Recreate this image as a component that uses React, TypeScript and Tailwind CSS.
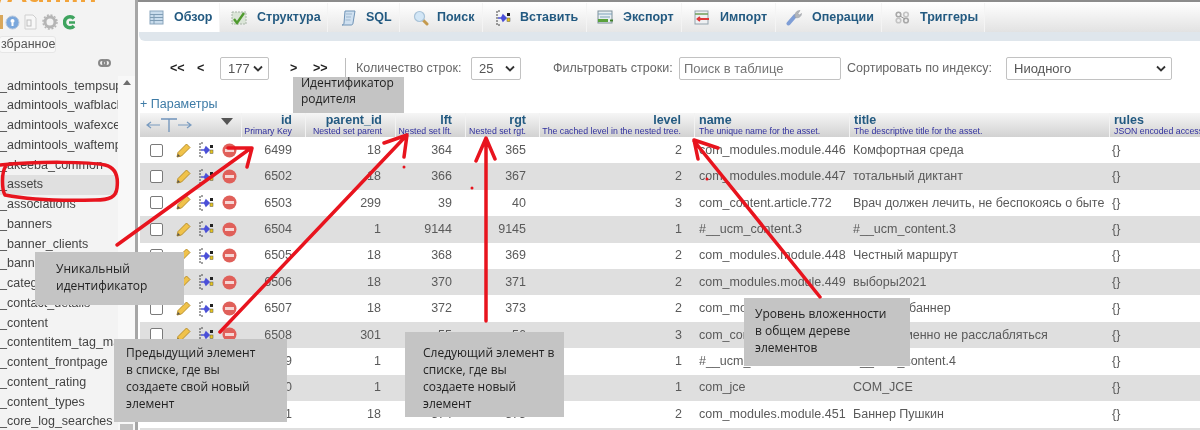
import { FunctionComponent } from "react";

const sidebarItems = [
  "_admintools_tempsupers",
  "_admintools_wafblacklists",
  "_admintools_wafexceptions",
  "_admintools_waftemplates",
  "_akeeba_common",
  "_assets",
  "_associations",
  "_banners",
  "_banner_clients",
  "_banner_tracks",
  "_categories",
  "_contact_details",
  "_content",
  "_contentitem_tag_map",
  "_content_frontpage",
  "_content_rating",
  "_content_types",
  "_core_log_searches",
];

const rows = [
  ["6499", "18", "364", "365", "2", "com_modules.module.446", "Комфортная среда"],
  ["6502", "18", "366", "367", "2", "com_modules.module.447", "тотальный диктант"],
  ["6503", "299", "39", "40", "3", "com_content.article.772", "Врач должен лечить, не беспокоясь о быте"],
  ["6504", "1", "9144", "9145", "1", "#__ucm_content.3", "#__ucm_content.3"],
  ["6505", "18", "368", "369", "2", "com_modules.module.448", "Честный маршрут"],
  ["6506", "18", "370", "371", "2", "com_modules.module.449", "выборы2021"],
  ["6507", "18", "372", "373", "2", "com_modules.module.450", "Большой баннер"],
  ["6508", "301", "55", "56", "3", "com_content.article.773", "Одновременно не расслабляться"],
  ["6509", "1", "9146", "9147", "1", "#__ucm_content.4", "#__ucm_content.4"],
  ["6510", "1", "9148", "9149", "1", "com_jce", "COM_JCE"],
  ["6511", "18", "374", "375", "2", "com_modules.module.451", "Баннер Пушкин"],
];

const columns =
  "grid grid-cols-[101px_64px_90px_70px_74px_155px_155px_260px_92px]";

const TableIcon = () => (
  <svg width="15" height="15" viewBox="0 0 15 15">
    <rect x="1" y="1" width="13" height="13" fill="#c9dcec" stroke="#8aa6bd" />
    <path d="M1 4.5h13M1 7.5h13M1 10.5h13M5 4.5v9.5" stroke="#7f9db5" />
  </svg>
);

const StructureIcon = () => (
  <svg width="16" height="16" viewBox="0 0 16 16">
    <rect x="1" y="2" width="14" height="12" fill="#dbe5d8" stroke="#a8b5a8" strokeDasharray="2 1" />
    <path d="M3 9l3 4 7-10" fill="none" stroke="#4f9a2e" strokeWidth="2.4" />
  </svg>
);

const SqlIcon = () => (
  <svg width="15" height="16" viewBox="0 0 15 16">
    <path d="M4 1h10l-2 12c0 1.5-1 2-2 2H1c1 0 2-1 2-2z" fill="#cfe0f0" stroke="#6f93b6" />
    <path d="M5 4h6M5 7h5M4.500 10h5" stroke="#9db7cf" />
  </svg>
);

const SearchIcon = () => (
  <svg width="16" height="16" viewBox="0 0 16 16">
    <path d="M9.500 9.500L14 14" stroke="#c49a4e" strokeWidth="3" strokeLinecap="round" />
    <circle cx="6.500" cy="6.500" r="5" fill="#d2e6f6" stroke="#a9c3d8" strokeWidth="1.200" />
  </svg>
);

const InsertIcon = () => (
  <svg width="15" height="16" viewBox="0 0 15 16">
    <path d="M4 1H1v14h3" fill="none" stroke="#444" strokeDasharray="2 1" />
    <path d="M2 8h5M7 5l-1.500 3L7 11l3-3z" fill="#4b50d8" stroke="#4b50d8" strokeWidth="1.500" />
    <rect x="11" y="3" width="3" height="3" fill="#222" />
    <rect x="11" y="8" width="3" height="3.500" fill="#e6c41e" stroke="#555" strokeWidth=".5" />
  </svg>
);

const ExportIcon = () => (
  <svg width="17" height="15" viewBox="0 0 17 15">
    <rect x="1" y="1" width="14" height="12" fill="#e6eef2" stroke="#7d8f9a" />
    <path d="M1 4h14M3 7h10" stroke="#7fa3bb" />
    <path d="M1 10.500h10" stroke="#5aa13b" strokeWidth="3" />
    <path d="M13 10.500l3 .1" stroke="#3f7f2a" strokeWidth="2" />
  </svg>
);

const ImportIcon = () => (
  <svg width="16" height="15" viewBox="0 0 16 15">
    <rect x="1" y="1" width="13" height="13" fill="#eef0f2" stroke="#94a3ad" />
    <path d="M1 4h13" stroke="#6f9f5a" strokeWidth="1.500" />
    <path d="M4 9h11M6 7L3.500 9 6 11" fill="none" stroke="#dd3b3b" strokeWidth="1.800" />
  </svg>
);

const WrenchIcon = () => (
  <svg width="16" height="17" viewBox="0 0 16 17">
    <path d="M2.500 14.500L9 7" stroke="#7f9ed6" strokeWidth="4" strokeLinecap="round" />
    <path d="M9 7.500c-.5-3 1.500-6 5-6l-2 3 1.500 1.500 2-1.500c0 3-3 5-6 4z" fill="#b3b6bb" stroke="#9a9da3" strokeWidth=".6" />
  </svg>
);

const TriggerIcon = () => (
  <svg width="15" height="13" viewBox="0 0 15 13">
    <circle cx="3.500" cy="3.500" r="2.300" fill="none" stroke="#a8a8a8" strokeWidth="1.600" />
    <circle cx="11" cy="3.500" r="2.300" fill="none" stroke="#c4c4c4" strokeWidth="1.600" />
    <circle cx="3.500" cy="9.500" r="2.300" fill="none" stroke="#c4c4c4" strokeWidth="1.600" />
    <circle cx="11" cy="9.500" r="2.300" fill="none" stroke="#a8a8a8" strokeWidth="1.600" />
    <path d="M5 5l5 3" stroke="#999" />
  </svg>
);

const tabs = [
  { label: "Обзор", width: "w-[81px]", icon: <TableIcon />, active: true, gap: "ml-[10px]", textGap: "ml-[10px]" },
  { label: "Структура", width: "w-[108px]", icon: <StructureIcon />, active: false, gap: "ml-[11px]", textGap: "ml-[10px]" },
  { label: "SQL", width: "w-[72px]", icon: <SqlIcon />, active: false, gap: "ml-[13px]", textGap: "ml-[10px]" },
  { label: "Поиск", width: "w-[83px]", icon: <SearchIcon />, active: false, gap: "ml-[13px]", textGap: "ml-[8px]" },
  { label: "Вставить", width: "w-[104px]", icon: <InsertIcon />, active: false, gap: "ml-[13px]", textGap: "ml-[9px]" },
  { label: "Экспорт", width: "w-[95px]", icon: <ExportIcon />, active: false, gap: "ml-[10px]", textGap: "ml-[9px]" },
  { label: "Импорт", width: "w-[94px]", icon: <ImportIcon />, active: false, gap: "ml-[12px]", textGap: "ml-[10px]" },
  { label: "Операции", width: "w-[106px]", icon: <WrenchIcon />, active: false, gap: "ml-[10px]", textGap: "ml-[10px]" },
  { label: "Триггеры", width: "w-[103px]", icon: <TriggerIcon />, active: false, gap: "ml-[13px]", textGap: "ml-[10px]" },
];

const Chevron = () => (
  <svg width="10" height="7" viewBox="0 0 10 7" className="shrink-0">
    <path d="M1 1.500l4 4 4-4" fill="none" stroke="#333" strokeWidth="1.800" />
  </svg>
);

type SelectBoxProps = { value: string; className: string };

const SelectBox: FunctionComponent<SelectBoxProps> = ({ value, className }) => (
  <div
    className={`h-[23px] flex items-center justify-between pl-[7px] pr-[5px] bg-white border border-[#c2c2c2] rounded-[2px] text-[13px] text-[#555] ${className}`}
  >
    <span>{value}</span>
    <Chevron />
  </div>
);

const RowIcons = () => (
  <div className="flex items-center pl-[10px]">
    <div className="w-[13px] h-[13px] bg-white border border-[#7a7a7a] rounded-[2px]" />
    <svg width="17" height="17" viewBox="0 0 17 17" className="ml-[12px]">
      <path d="M2 15l1-4.500L11.500 2l3.500 3.500L6.500 14z" fill="#f0c24a" stroke="#b98f2a" />
      <path d="M2 15l1-3 2 2z" fill="#555" />
    </svg>
    <svg width="15" height="16" viewBox="0 0 15 16" className="ml-[7px]">
      <path d="M4 1H1v14h3" fill="none" stroke="#444" strokeDasharray="2 1" />
      <path d="M2 8h5M7 5l-1.500 3L7 11l3-3z" fill="#4b50d8" stroke="#4b50d8" strokeWidth="1.500" />
      <rect x="11" y="3" width="3" height="3" fill="#222" />
      <rect x="11" y="8" width="3" height="3.500" fill="#e6c41e" stroke="#555" strokeWidth=".5" />
    </svg>
    <svg width="15" height="15" viewBox="0 0 15 15" className="ml-[8px]">
      <circle cx="7.500" cy="7.500" r="7" fill="#e0605a" />
      <rect x="3" y="6" width="9" height="3" fill="#f6d6d4" />
    </svg>
  </div>
);

type HeadCellProps = { title: string; sub: string; right?: boolean };

const HeadCell: FunctionComponent<HeadCellProps> = ({ title, sub, right }) => (
  <div
    className={`border-l border-[#f2f2f2] overflow-hidden whitespace-nowrap flex flex-col pt-[1px] ${
      right ? "items-end pr-[13px]" : "items-start pl-[4px]"
    }`}
  >
    <span className="text-[12.500px] leading-[12px] font-bold text-[#235a81]">{title}</span>
    <span className="text-[8.750px] leading-[11px] text-[#2f2f9d]">{sub}</span>
  </div>
);

export default function App() {
  return (
    <div className="relative w-[1200px] h-[430px] overflow-hidden bg-white flex blur-[0.3px] font-['Liberation_Sans',Arial,sans-serif]">
      {/* left tree */}
      <aside className="w-[135px] h-full shrink-0 bg-[#f3f3f3] border-r-[3px] border-[#a6a6a6] box-content overflow-hidden">
        <div className="h-[8px] overflow-hidden">
          <div className="-mt-[24px] -ml-[87px] text-[29px] leading-[32px] font-bold text-[#f2a33a] whitespace-nowrap">
            phpMyAdmin
          </div>
        </div>
        <div className="h-[28px] flex items-center">
          <div className="w-[3px] h-[14px] bg-[#d9a75a]" />
          <svg width="15" height="15" viewBox="0 0 15 15" className="ml-[2px]">
            <circle cx="7.500" cy="7.500" r="6.500" fill="#7aa7dc" stroke="#b8c8dc" />
            <circle cx="7.500" cy="6" r="2" fill="#fff" />
            <path d="M7.500 8v3" stroke="#fff" strokeWidth="2" />
          </svg>
          <svg width="15" height="16" viewBox="0 0 15 16" className="ml-[3px]">
            <path d="M2 1h8l3 3v11H2z" fill="#f7f7f7" stroke="#cfcfcf" />
            <rect x="4" y="6" width="4" height="6" fill="none" stroke="#bdbdbd" />
          </svg>
          <svg width="16" height="16" viewBox="0 0 16 16" className="ml-[4px]">
            <circle cx="8" cy="8" r="5" fill="none" stroke="#b5b5b5" strokeWidth="3" />
            <circle cx="8" cy="8" r="7" fill="none" stroke="#b5b5b5" strokeWidth="1.500" strokeDasharray="2 1.700" />
          </svg>
          <svg width="13" height="15" viewBox="0 0 13 15" className="ml-[5px]">
            <path d="M11 3.500A5.500 5.500 0 1 0 11 11" fill="none" stroke="#3fa45f" strokeWidth="3.500" />
            <path d="M6 7.500h6" stroke="#3fa45f" strokeWidth="2.500" />
          </svg>
        </div>
        <div className="h-[17px] w-[57px] -ml-[1px] flex items-center pl-[1px] bg-[#f8f8f8] border border-[#e6e6e6] rounded-[3px] overflow-hidden text-[12.500px] text-[#555] whitespace-nowrap">
          збранное
        </div>
        <div className="h-[20px] flex items-center justify-end pr-[24px]">
          <svg width="13" height="8" viewBox="0 0 13 8">
            <rect x="1" y="1" width="7" height="6" rx="3" fill="none" stroke="#888" strokeWidth="2" />
            <rect x="5" y="1" width="7" height="6" rx="3" fill="none" stroke="#888" strokeWidth="2" />
          </svg>
        </div>
        <div className="flex mt-[3px]">
          <div className="w-[118px]">
            {sidebarItems.map((item) => (
              <div
                key={item}
                className={`h-[19.750px] flex items-center overflow-hidden whitespace-nowrap text-[12.500px] text-[#444] ${
                  item === "_assets" ? "bg-[#e0e0e0]" : ""
                }`}
              >
                {item}
              </div>
            ))}
          </div>
          <div className="w-[17px] bg-[#f8f8f8] flex flex-col items-center justify-between">
            <div className="w-0 h-0 mt-[4px] border-x-[4px] border-x-transparent border-b-[5px] border-b-[#6e6e6e]" />
            <div className="w-[13px] h-[8px] bg-[#c1c1c1]" />
          </div>
        </div>
      </aside>

      <main className="flex-1 min-w-0 pl-[1px] border-t-2 border-[#8c8c8c] overflow-hidden">
        {/* tabs */}
        <nav className="h-[30px] pt-[1px] flex bg-gradient-to-b from-white to-[#e2e2e2]">
          {tabs.map((tab) => (
            <div
              key={tab.label}
              className={`${tab.width} shrink-0 flex items-center border-r border-[#f4f4f4] ${
                tab.active ? "bg-white" : "bg-gradient-to-b from-white to-[#e6e6e6]"
              }`}
            >
              <span className={`${tab.gap} shrink-0 flex`}>{tab.icon}</span>
              <span className={`${tab.textGap} text-[12.500px] font-bold text-[#235a81] whitespace-nowrap`}>
                {tab.label}
              </span>
            </div>
          ))}
        </nav>
        <div className="h-[9px] bg-[#dfe6ec] rounded-bl-[6px]" />

        {/* paging and filter */}
        <div className="h-[23px] mt-[16px] flex items-center text-[12.500px] text-[#666] whitespace-nowrap">
          <span className="ml-[31px] w-[27px] font-bold text-[#222]">&lt;&lt;</span>
          <span className="w-[23px] font-bold text-[#222]">&lt;</span>
          <SelectBox value="177" className="w-[49px]" />
          <span className="ml-[21px] w-[23px] font-bold text-[#222]">&gt;</span>
          <span className="w-[32px] font-bold text-[#222]">&gt;&gt;</span>
          <div className="w-px h-[21px] bg-[#bdbdbd]" />
          <span className="ml-[10px] w-[115px]">Количество строк:</span>
          <SelectBox value="25" className="w-[50px]" />
          <span className="ml-[32px] w-[126px]">Фильтровать строки:</span>
          <input
            placeholder="Поиск в таблице"
            className="w-[162px] h-[23px] px-[4px] bg-white border border-[#c2c2c2] rounded-[2px] text-[13px] placeholder:text-[#757575]"
          />
          <span className="ml-[6px] w-[159px]">Сортировать по индексу:</span>
          <SelectBox value="Ниодного" className="w-[166px]" />
        </div>

        <div className="h-[18px] mt-[15px] pl-[1px] flex items-center text-[12.500px] text-[#3e7ba6]">+ Параметры</div>

        {/* table */}
        <div className="w-[1070px] ml-[1px]">
          <div className={`${columns} h-[24px] bg-gradient-to-b from-[#f6f6f6] to-[#d2d2d2]`}>
            <div className="flex items-center justify-between pl-[6px] pr-[8px]">
              <svg width="46" height="16" viewBox="0 0 46 16">
                <path d="M1 8h13M5 5L1 8l4 3M32 8h13M41 5l4 3-4 3" fill="none" stroke="#7a9cc0" strokeWidth="1.200" />
                <path d="M15 2h16M23 2v13" fill="none" stroke="#6f93bb" strokeWidth="1.300" />
              </svg>
              <div className="w-0 h-0 border-x-[6px] border-x-transparent border-t-[7px] border-t-[#555] -mt-[7px]" />
            </div>
            <HeadCell title="id" sub="Primary Key" right />
            <HeadCell title="parent_id" sub="Nested set parent" right />
            <HeadCell title="lft" sub="Nested set lft." right />
            <HeadCell title="rgt" sub="Nested set rgt." right />
            <HeadCell title="level" sub="The cached level in the nested tree." right />
            <HeadCell title="name" sub="The unique name for the asset." />
            <HeadCell title="title" sub="The descriptive title for the asset." />
            <HeadCell title="rules" sub="JSON encoded access control." />
          </div>
          {rows.map((row, i) => (
            <div
              key={row[0]}
              className={`${columns} h-[26.400px] items-center text-[12.500px] text-[#5a5a5a] whitespace-nowrap ${
                i % 2 === 1 ? "bg-[#dfdfdf]" : "bg-white"
              }`}
            >
              <RowIcons />
              <div className="text-right pr-[13px]">{row[0]}</div>
              <div className="text-right pr-[14px]">{row[1]}</div>
              <div className="text-right pr-[13px]">{row[2]}</div>
              <div className="text-right pr-[13px]">{row[3]}</div>
              <div className="text-right pr-[12px]">{row[4]}</div>
              <div className="pl-[5px]">{row[5]}</div>
              <div className="pl-[4px]">{row[6]}</div>
              <div className="pl-[3px]">{"{}"}</div>
            </div>
          ))}
          <div className="h-[2px] mt-[1px] bg-[#dfdfdf]" />
        </div>
      </main>

      {/* annotation callouts */}
      <div className="absolute left-[293px] top-[77px] w-[111px] h-[36px] bg-[#c4c4c4] pl-[8px] text-[12px] leading-[16px] text-[#222] font-['Open_Sans',sans-serif]">
        <div className="-mt-[2px]">
          Идентификатор
          <br />
          родителя
        </div>
      </div>
      <div className="absolute left-[35px] top-[252px] w-[149px] h-[53px] bg-[#c4c4c4] pl-[21px] pt-[8px] text-[12px] leading-[17px] text-[#222] font-['Open_Sans',sans-serif]">
        Уникальный
        <br />
        идентификатор
      </div>
      <div className="absolute left-[114px] top-[339px] w-[173px] h-[83px] bg-[#c4c4c4] pl-[12px] pt-[5px] text-[12px] leading-[17px] text-[#222] font-['Open_Sans',sans-serif]">
        Предыдущий элемент
        <br />в списке, где вы
        <br />
        создаете свой новый
        <br />
        элемент
      </div>
      <div className="absolute left-[405px] top-[332px] w-[159px] h-[85px] bg-[#c4c4c4] pl-[18px] pt-[12px] text-[12px] leading-[17px] text-[#222] font-['Open_Sans',sans-serif]">
        Следующий элемент в
        <br />
        списке, где вы
        <br />
        создаете новый
        <br />
        элемент
      </div>
      <div className="absolute left-[744px] top-[298px] w-[166px] h-[68px] bg-[#c4c4c4] pl-[11px] pt-[7px] text-[12px] leading-[17px] text-[#222] font-['Open_Sans',sans-serif]">
        Уровень вложенности
        <br />в общем дереве
        <br />
        элементов
      </div>

      {/* red marker strokes drawn over the screenshot */}
      <svg
        width="1200"
        height="430"
        viewBox="0 0 1200 430"
        className="absolute inset-0 pointer-events-none"
        fill="none"
        stroke="#e8141e"
        strokeWidth="3.500"
        strokeLinecap="round"
        strokeLinejoin="round"
      >
        <path d="M0 165C40 161 90 162 105 165C118 168 118 180 117 188C116 197 110 200 95 200C60 201 25 199 5 195C2 190 1 172 6 166" />
        <path d="M117 245L251 148M228 148H252L247 167" />
        <path d="M220 332L406 136M384 143L407 135L404 157" />
        <path d="M486 321V139M476 161L486 138L495 159" />
        <path d="M820 297L694 141M698 159L694 140L718 148" />
        <circle cx="404" cy="167" r="1.500" fill="#e8141e" stroke="none" />
        <circle cx="472" cy="188" r="1.500" fill="#e8141e" stroke="none" />
        <circle cx="707" cy="179" r="1.500" fill="#e8141e" stroke="none" />
      </svg>
    </div>
  );
}
